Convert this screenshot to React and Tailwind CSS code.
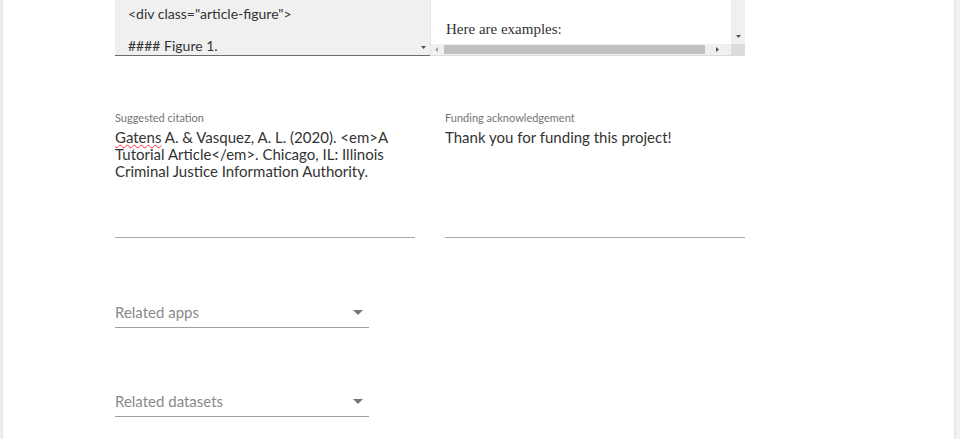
import React from "react";

const lato = { fontFamily: "Lato, 'Liberation Sans', sans-serif" };

function Caret({ className = "" }) {
  return (
    <svg width="10" height="5" viewBox="0 0 10 5" className={className}>
      <path d="M0 0h10L5 5z" fill="#757575" />
    </svg>
  );
}

function Tiny({ dir = "down", color = "#505050" }) {
  const d = {
    down: "M0 0h5L2.5 3z",
    left: "M3 0v5L0 2.5z",
    right: "M0 0v5l3-2.5z",
  }[dir];
  return (
    <svg width="5" height="5" viewBox="0 0 5 5">
      <path d={d} fill={color} />
    </svg>
  );
}

function Editor() {
  return (
    <div className="flex h-[56px] w-[630px]">
      <div className="relative w-[315px] bg-[#f0f0f0] border-b border-[#6b6b6b] pl-[13px] text-[14px] leading-[16px] text-[#333]">
        <div className="pt-[6px]">&lt;div class="article-figure"&gt;</div>
        <div className="pt-[16px]">#### Figure 1.</div>
        <div className="absolute right-[4px] top-[46px] flex">
          <Tiny dir="down" />
        </div>
      </div>
      <div className="flex w-[315px] flex-col border-l border-[#e3e3e3] border-b border-b-[#dcdcdc]">
        <div className="flex flex-1">
          <div
            className="flex-1 pl-[15px] pt-[20px] text-[15px] leading-[18px] text-[#333]"
            style={{ fontFamily: "'Liberation Serif', serif" }}
          >
            Here are examples:
          </div>
          <div className="flex w-[14px] flex-col items-center justify-end bg-[#f0f0f0] pb-[4px]">
            <Tiny dir="down" />
          </div>
        </div>
        <div className="flex h-[11px] items-center bg-[#f0f0f0]">
          <div className="flex w-[13px] justify-center">
            <Tiny dir="left" color="#a3a3a3" />
          </div>
          <div className="h-[9px] w-[261px] bg-[#c1c1c1]" />
          <div className="flex flex-1 justify-center">
            <Tiny dir="right" />
          </div>
          <div className="h-full w-[14px] bg-[#dcdcdc]" />
        </div>
      </div>
    </div>
  );
}

function TextField({ label, children }) {
  return (
    <div className="w-[300px]">
      <div className="text-[11px] leading-[13px] text-[#757575]">{label}</div>
      <div className="mt-[5px] h-[109px] border-b border-[#a8a8a8] text-[15px] leading-[17px] text-[#333]">
        {children}
      </div>
    </div>
  );
}

function SelectField({ label, className = "" }) {
  return (
    <div className={`flex w-[254px] items-center justify-between border-b border-[#9e9e9e] pb-[5px] ${className}`}>
      <span className="text-[15px] leading-[20px] text-[#8a8a8a]">{label}</span>
      <Caret className="mr-[6px]" />
    </div>
  );
}

export default function App() {
  return (
    <div className="h-[439px] overflow-hidden bg-[#f2f2f2]" style={lato}>
      <div className="ml-[3px] h-[439px] w-[951px] bg-white shadow-[0_0_3px_rgba(0,0,0,0.15)]">
        <div className="pl-[112px]">
          <Editor />
          <div className="mt-[55px] flex gap-[30px]">
            <TextField label="Suggested citation">
              <span className="underline decoration-wavy decoration-red-500 decoration-1 underline-offset-1">Gatens</span>{" "}
              A. &amp; Vasquez, A. L. (2020). &lt;em&gt;A Tutorial Article&lt;/em&gt;. Chicago, IL: Illinois Criminal Justice Information Authority.
            </TextField>
            <TextField label="Funding acknowledgement">Thank you for funding this project!</TextField>
          </div>
          <SelectField label="Related apps" className="mt-[64px]" />
          <SelectField label="Related datasets" className="mt-[63px]" />
        </div>
      </div>
    </div>
  );
}
